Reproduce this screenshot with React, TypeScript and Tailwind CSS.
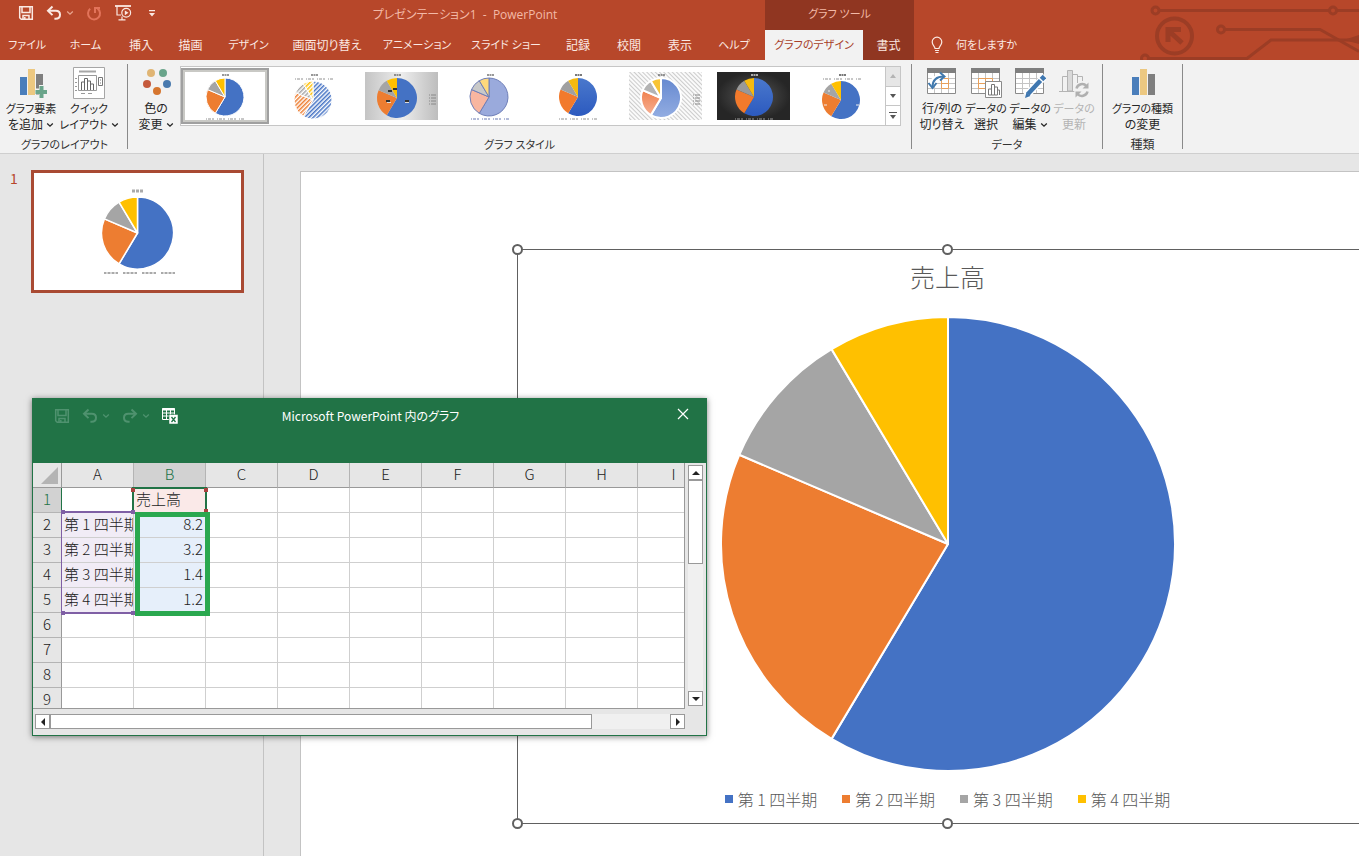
import type { ReactNode } from 'react'
import clsx from 'clsx'

const VALUES = [8.2, 3.2, 1.4, 1.2]
const COLORS = ['#4472c4', '#ed7d31', '#a5a5a5', '#ffc000']
const LABELS = ['第 1 四半期', '第 2 四半期', '第 3 四半期', '第 4 四半期']

const labelSize = (text: string) => (/[\u4e00-\u9fff]/.test(text) && !/[ァ-ー]{3}/.test(text) ? 'text-xs' : 'text-[11px]')

type PieProps = {
  cx: number
  cy: number
  r: number
  fills?: string[]
  stroke?: string
  strokeWidth?: number
}

const Pie = ({ cx, cy, r, fills = COLORS, stroke = '#fff', strokeWidth = 1 }: PieProps) => {
  const total = VALUES.reduce((a, b) => a + b, 0)
  let angle = 0
  return (
    <g stroke={stroke} strokeWidth={strokeWidth} strokeLinejoin="round">
      {VALUES.map((value, i) => {
        const start = angle
        angle += (value / total) * Math.PI * 2
        const large = angle - start > Math.PI ? 1 : 0
        const x1 = cx + r * Math.sin(start)
        const y1 = cy - r * Math.cos(start)
        const x2 = cx + r * Math.sin(angle)
        const y2 = cy - r * Math.cos(angle)
        return <path key={i} fill={fills[i]} d={`M${cx} ${cy}L${x1} ${y1}A${r} ${r} 0 ${large} 1 ${x2} ${y2}Z`} />
      })}
    </g>
  )
}

/* ---------- icons ---------- */

const Chevron = ({ className }: { className?: string }) => (
  <svg viewBox="0 0 8 8" className={clsx('h-2 w-2', className)} fill="none" stroke="currentColor" strokeWidth="1.3">
    <path d="M1.2 2.5 4 5.2 6.8 2.5" />
  </svg>
)

const SaveIcon = () => (
  <svg viewBox="0 0 16 16" className="h-4 w-4" fill="none" stroke="currentColor" strokeWidth="1.5">
    <path d="M1.7 1.7h12.6v12.6H3.2L1.7 12.8Z" />
    <path d="M4 2v5.500h8V2M5 14v-3.500h6v3.500M6.800 12v2" />
  </svg>
)

const UndoIcon = ({ className }: { className?: string }) => (
  <svg viewBox="0 0 16 16" className={clsx('h-4 w-4', className)} fill="none" stroke="currentColor" strokeWidth="2">
    <path d="M6.5 1.5 2 5.8l4.5 4.3" />
    <path d="M2.4 5.8h7.4c2.5 0 4.2 1.7 4.2 4s-1.7 4-4.4 4H8.4" />
  </svg>
)

const RepeatIcon = () => (
  <svg viewBox="0 0 16 16" className="h-4 w-4" fill="none" stroke="currentColor" strokeWidth="2">
    <path d="M4.2 3.8A6 6 0 1 0 11.6 3.6M9 8V3h5" />
  </svg>
)

const SlideshowIcon = () => (
  <svg viewBox="0 0 18 16" className="h-4 w-[18px]" fill="none" stroke="currentColor" strokeWidth="1.2">
    <path d="M1 1h16" strokeWidth="1.8" />
    <path d="M3 1v9h4M8 11.500v3M4.500 14.800h7" />
    <circle cx="12.2" cy="7.8" r="4.4" />
    <path d="m10.800 5.400 3.700 2.400-3.700 2.400Z" fill="currentColor" stroke="none" />
  </svg>
)

const Bars = () => (
  <>
    <rect x="5" y="10" width="7" height="18" fill="#4a7ebb" />
    <rect x="13" y="2" width="7" height="26" fill="#ecc881" />
    <rect x="21" y="7" width="7" height="21" fill="#7f7f7f" />
  </>
)

const Icon = ({ children }: { children: ReactNode }) => (
  <svg viewBox="0 0 32 32" className="h-8 w-8" fill="none">
    {children}
  </svg>
)

const AddElementIcon = () => (
  <Icon>
    <Bars />
    <path d="M27 18v13M20.5 24.5h13" stroke="#f2f2f2" strokeWidth="6" />
    <path d="M26.5 19v12M20.5 25h12" stroke="#6aa58b" strokeWidth="4" />
  </Icon>
)

const QuickLayoutIcon = () => (
  <Icon>
    <path d="M.5.5h31v31H.5Z" fill="#fff" stroke="#a6a6a6" />
    <path d="M6 4.5h17" stroke="#a6a6a6" strokeWidth="2" />
    <path d="M5.5 8.5h18v15h-18Z" stroke="#999" />
    <path d="M8.5 23v-8h3v8M11.5 23V11.500h3V23M14.500 23v-9h3v9M17.500 23v-6h3v6" stroke="#666" />
    <path d="M25.500 10.500h4v8h-4ZM27 13h1M27 16h1" stroke="#777" />
    <path d="M2 11.500h2M2 15.500h2M2 19.500h2M2 23.500h2M8 26.500h4M15 26.500h4" stroke="#999" />
  </Icon>
)

const ColorsIcon = () => (
  <Icon>
    <circle cx="11" cy="6" r="4" fill="#e0b574" />
    <circle cx="23" cy="6" r="4" fill="#6aa58b" />
    <circle cx="7" cy="17" r="4" fill="#c55a3c" />
    <circle cx="27" cy="17" r="4" fill="#4a7aae" />
    <circle cx="17" cy="24" r="4" fill="#d6762f" />
  </Icon>
)

const Grid = () => (
  <>
    <path d="M1.500 1.500h28v25h-28Z" fill="#fff" stroke="#8a8a8a" />
    <path d="M1 1h29v5H1Z" fill="#7f7f7f" />
    <path d="M2 11.500h27M2 16.500h27M2 21.500h27M8.500 6v20M15.500 6v20M22.500 6v20" stroke="#c4c4c4" />
  </>
)

const SwitchIcon = () => (
  <Icon>
    <Grid />
    <path d="M15.500 11.500h7v10h-7ZM15.500 16.500h7" stroke="#e8a05a" />
    <path d="M6 19C6 12 10 9.500 18 9.500" stroke="#fff" strokeWidth="5" />
    <path d="M6.500 20C6.500 13 10 9.500 18 9.500" stroke="#4179ad" strokeWidth="2" />
    <path d="m14 5.500 4.500 4-4.500 4M2.500 16l4 5 4-5" stroke="#4179ad" strokeWidth="2" />
  </Icon>
)

const SelectDataIcon = () => (
  <Icon>
    <Grid />
    <path d="M8.500 11.500h14M8.500 11.500v10M8.500 16.500h14M15.500 11.500v10M22.500 11.500v6M8.500 21.500h8" stroke="#e8a05a" />
    <path d="M15.500 14.500h16v16h-16Z" fill="#fff" stroke="#8a8a8a" />
    <path d="M18.500 28v-6h3v6ZM21.500 28V17.500h3V28ZM24.500 28v-8h3v8ZM27.500 28v-5h2v5" stroke="#777" />
  </Icon>
)

const EditDataIcon = () => (
  <Icon>
    <Grid />
    <path d="M31 9 12 29" stroke="#fff" strokeWidth="7" />
    <path d="m27.500 12.500 3-3" stroke="#3f77b0" strokeWidth="5" />
    <path d="M26.500 13.500 14 27" stroke="#3f77b0" strokeWidth="4.500" />
    <path d="m11 31 1.500-6 4 4Z" fill="#3f77b0" />
  </Icon>
)

const RefreshDataIcon = () => (
  <Icon>
    <path d="M1 24.500h17M4.500 24V9.500h5V24M14.500 24V7.500h5V16M19.500 9.500h5V14" stroke="#b4b4b4" />
    <path d="M9.500 3.500h5V24h-5Z" fill="#d9d9d9" stroke="#b4b4b4" />
    <circle cx="24" cy="23" r="8" fill="#f2f2f2" />
    <path d="M18.500 21.500a5.800 5.800 0 0 1 10-2.500M29.500 24.500a5.800 5.800 0 0 1-10 2.500" stroke="#b0b0b0" strokeWidth="2.500" />
    <path d="M30.500 15.500v6h-6ZM17.500 30.500v-6h6Z" fill="#b0b0b0" />
  </Icon>
)

/* ---------- header ---------- */

const TABS = [
  { label: 'ファイル', width: 'w-[54px]' },
  { label: 'ホーム', width: 'w-[63px]' },
  { label: '挿入', width: 'w-[48px]' },
  { label: '描画', width: 'w-[51px]' },
  { label: 'デザイン', width: 'w-[65px]' },
  { label: '画面切り替え', width: 'w-[92px]' },
  { label: 'アニメーション', width: 'w-[88px]' },
  { label: 'スライド ショー', width: 'w-[90px]' },
  { label: '記録', width: 'w-[54px]' },
  { label: '校閲', width: 'w-[48px]' },
  { label: '表示', width: 'w-[54px]' },
  { label: 'ヘルプ', width: 'w-[54px]' },
]

const Circuit = () => (
  <svg viewBox="0 0 219 60" className="absolute top-0 right-0 h-[60px] w-[219px]" fill="none" stroke="#9c3d25" strokeWidth="3">
    <circle cx="15.500" cy="10.500" r="3.500" />
    <path d="M19 10.500h170M197 10.500h22" />
    <circle cx="193" cy="10.500" r="3.500" />
    <circle cx="34.500" cy="36" r="17.500" strokeWidth="4" />
    <path d="M28 42V29.500h13M29 31l13 12" strokeWidth="5" />
    <circle cx="81" cy="29.500" r="3.500" />
    <path d="M85 29.500h95l39 22" />
    <circle cx="5" cy="58.500" r="3.500" />
    <path d="M9 58.500h98l24-18.500h88" />
    <path d="m204 40 15-5v9Z" fill="#9c3d25" stroke="none" />
  </svg>
)

const Header = () => (
  <header className="relative flex h-[60px] overflow-hidden bg-[#b7472a] text-[#fbe9e3]">
    <Circuit />
    <div className="flex w-[765px] shrink-0 flex-col">
      <div className="flex h-[30px] items-center">
        <div className="flex h-[30px] w-[165px] items-center pb-1 pl-[18px]">
          <button aria-label="上書き保存"><SaveIcon /></button>
          <button aria-label="元に戻す" className="ml-3"><UndoIcon /></button>
          <button aria-label="元に戻す一覧" className="ml-1 text-[#e8a58f]"><Chevron /></button>
          <button aria-label="繰り返し" className="ml-3 text-[#e2735a]"><RepeatIcon /></button>
          <button aria-label="最初から開始" className="ml-3"><SlideshowIcon /></button>
          <button aria-label="クイック アクセス ツール バーのカスタマイズ" className="ml-4">
            <svg viewBox="0 0 8 8" className="h-2 w-2" fill="currentColor">
              <path d="M1 1h6v1.200H1ZM1 4h6L4 7.500Z" />
            </svg>
          </button>
        </div>
        <h1 className="flex-1 text-center text-xs whitespace-pre text-[#f3b9a7]">プレゼンテーション1  -  PowerPoint</h1>
      </div>
      <nav className="flex h-[30px] pt-px">
        {TABS.map((tab) => (
          <button
            key={tab.label}
            className={clsx('flex shrink-0 items-center justify-center whitespace-nowrap', labelSize(tab.label), tab.width)}
          >
            {tab.label}
          </button>
        ))}
      </nav>
    </div>
    <div className="relative w-[149px] shrink-0 bg-[#903621]">
      <p className="h-[30px] text-center text-[11px] leading-7 text-[#f3b9a7]">グラフ ツール</p>
      <div className="flex h-[30px]">
        <button className="w-[98px] bg-[#f2f2f2] pt-px text-[11px] whitespace-nowrap text-[#a8402a]">グラフのデザイン</button>
        <button className="flex-1 pt-px text-xs">書式</button>
      </div>
    </div>
    <div className="flex items-end pl-4">
      <button className="flex h-[30px] items-center gap-3 text-[11px]">
        <svg viewBox="0 0 14 18" className="h-[18px] w-[14px]" fill="none" stroke="currentColor" strokeWidth="1.200">
          <path d="M5 12.500c0-2-2.800-3-2.800-6.500a4.800 4.800 0 0 1 9.600 0c0 3.500-2.800 4.500-2.800 6.500ZM5 14.500h4M5.500 16.500h3" />
        </svg>
        何をしますか
      </button>
    </div>
  </header>
)

/* ---------- ribbon ---------- */

type RibbonButtonProps = {
  icon: ReactNode
  lines: [string, string]
  menu?: boolean
  disabled?: boolean
  className?: string
}

const RibbonButton = ({ icon, lines, menu, disabled, className }: RibbonButtonProps) => (
  <button
    disabled={disabled}
    className={clsx(
      'flex shrink-0 flex-col items-center text-[11px] leading-4 whitespace-nowrap',
      disabled ? 'text-[#b4b4b4]' : 'text-[#262626]',
      className,
    )}
  >
    <span className="flex h-[35px] items-start pt-px">{icon}</span>
    <span className={clsx('leading-4', labelSize(lines[0]))}>{lines[0]}</span>
    <span className={clsx('flex items-center gap-[3px] leading-4', labelSize(lines[1]))}>
      {lines[1]}
      {menu && <Chevron />}
    </span>
  </button>
)

const RibbonGroup = ({ label, className, children }: { label: string; className?: string; children: ReactNode }) => (
  <section aria-label={label} className="flex shrink-0">
    <div className={clsx('flex flex-col pt-[6px]', className)}>
      <div className="flex h-[67px]">{children}</div>
      <p className={clsx('mt-1 text-center leading-4 text-[#333]', labelSize(label))}>{label}</p>
    </div>
    <div className="mt-1 h-[85px] w-px bg-[#8a8a8a]" />
  </section>
)

const Dashes = ({ y, color = '#777', x = 18 }: { y: number; color?: string; x?: number }) => (
  <path d={`M${x} ${y}h38`} stroke={color} strokeWidth="1" strokeDasharray="1 1 3 1 2 3" opacity="0.8" />
)

const TitleMark = ({ color = '#555', x = 37 }: { color?: string; x?: number }) => (
  <path d={`M${x - 3} 3h7`} stroke={color} strokeWidth="1.500" strokeDasharray="2 .5" opacity="0.8" />
)

const SideLegend = ({ color = '#888' }: { color?: string }) => (
  <path d="M64 23h8M64 26h8M64 29h8M64 32h8" stroke={color} strokeDasharray="1 1 5 1" />
)

const STYLES: { name: string; art: ReactNode }[] = [
  {
    name: 'スタイル 1',
    art: (
      <>
        <TitleMark x={36} />
        <Pie cx={36} cy={25} r={19} />
        <Dashes y={47} x={17} />
      </>
    ),
  },
  {
    name: 'スタイル 2',
    art: (
      <>
        <TitleMark />
        <Dashes y={7} />
        <Pie cx={36} cy={28} r={19} fills={['url(#hatch0)', 'url(#hatch1)', 'url(#hatch2)', 'url(#hatch3)']} />
      </>
    ),
  },
  {
    name: 'スタイル 3',
    art: (
      <>
        <rect width="73" height="48" fill="url(#silver)" />
        <TitleMark x={32} />
        <Pie cx={32} cy={26} r={20} stroke="none" />
        <path d="M21 29h4M40 29h4M23 19h4M28 17h4" stroke="#333" strokeWidth="2" />
        <path d="M22 30.500h4M40 30.500h4" stroke="#ddd" />
        <SideLegend />
      </>
    ),
  },
  {
    name: 'スタイル 4',
    art: (
      <>
        <TitleMark />
        <Pie cx={36} cy={25} r={19} fills={['#9aaadc', '#f8b6a0', '#c9c9c9', '#ffd97c']} stroke="#6f7fb8" />
        <Dashes y={47} color="#4458a0" />
      </>
    ),
  },
  {
    name: 'スタイル 5',
    art: (
      <>
        <TitleMark color="#222" />
        <Pie cx={37} cy={25} r={19} fills={['url(#blue)', '#f27a2c', '#a0a0a0', '#f5ba10']} stroke="none" />
        <Dashes y={47} />
      </>
    ),
  },
  {
    name: 'スタイル 6',
    art: (
      <>
        <rect width="73" height="48" fill="url(#stripes)" />
        <TitleMark x={32} />
        <Pie cx={32} cy={26} r={20} fills={['url(#soft)', 'url(#peach)', '#b4b4b4', '#f8c435']} strokeWidth={2} />
        <SideLegend />
      </>
    ),
  },
  {
    name: 'スタイル 7',
    art: (
      <>
        <rect width="73" height="48" fill="url(#dark)" />
        <TitleMark color="#fff" />
        <Pie cx={37} cy={25} r={19} fills={['url(#blue)', '#f27a2c', '#999', '#f5ba10']} stroke="none" />
        <Dashes y={47} color="#bbb" />
      </>
    ),
  },
  {
    name: 'スタイル 8',
    art: (
      <>
        <TitleMark color="#222" />
        <Dashes y={7} />
        <Pie cx={36} cy={28} r={19} stroke="none" />
        <path d="M19 33h3M51 33h3M23 19h2" stroke="#eee" />
      </>
    ),
  },
]

const GalleryDefs = () => (
  <svg className="absolute h-0 w-0" aria-hidden="true">
    <defs>
      {COLORS.map((color, i) => (
        <pattern key={color} id={`hatch${i}`} width="3" height="3" patternUnits="userSpaceOnUse" patternTransform="rotate(45)">
          <rect width="3" height="3" fill="#fff" />
          <rect width="1.500" height="3" fill={color} />
        </pattern>
      ))}
      <pattern id="stripes" width="3" height="3" patternUnits="userSpaceOnUse" patternTransform="rotate(-45)">
        <rect width="3" height="3" fill="#fafafa" />
        <rect width="1" height="3" fill="#ccc" />
      </pattern>
      <linearGradient id="silver">
        <stop offset="0" stopColor="#c4c4c4" />
        <stop offset=".5" stopColor="#ededed" />
        <stop offset="1" stopColor="#bdbdbd" />
      </linearGradient>
      <linearGradient id="blue" x2="0" y2="1">
        <stop offset="0" stopColor="#4a78cc" />
        <stop offset="1" stopColor="#2c5abf" />
      </linearGradient>
      <linearGradient id="soft" x2="0" y2="1">
        <stop offset="0" stopColor="#6689d0" />
        <stop offset="1" stopColor="#93ade2" />
      </linearGradient>
      <linearGradient id="peach" x2="0" y2="1">
        <stop offset="0" stopColor="#f0804c" />
        <stop offset="1" stopColor="#f6b095" />
      </linearGradient>
      <radialGradient id="dark">
        <stop offset="0" stopColor="#585858" />
        <stop offset="1" stopColor="#262626" />
      </radialGradient>
    </defs>
  </svg>
)

const Gallery = () => (
  <div className="flex h-[60px] flex-1 border border-[#c6c6c6] bg-white">
    <GalleryDefs />
    {STYLES.map((style, i) => (
      <button
        key={style.name}
        aria-label={style.name}
        className={clsx('flex w-[88px] items-center justify-center', i === 0 && 'my-px border-2 border-[#a0a0a0] bg-[#c9c9c5]')}
      >
        <span className={clsx('flex justify-center', i === 0 && 'w-20 bg-white')}>
          <svg viewBox="0 0 73 48" className="h-12 w-[73px]">
            {style.art}
          </svg>
        </span>
      </button>
    ))}
    <div className="flex flex-1 flex-col divide-y divide-[#c6c6c6] border-l border-[#c6c6c6] text-[#555]">
      <button aria-label="上へ" className="flex flex-1 items-center justify-center bg-[#e6e6e6] text-[#b4b4b4]">
        <svg viewBox="0 0 6 4" className="h-1 w-[6px]" fill="currentColor"><path d="M3 0 6 4H0Z" /></svg>
      </button>
      <button aria-label="下へ" className="flex flex-1 items-center justify-center">
        <svg viewBox="0 0 6 4" className="h-1 w-[6px]" fill="currentColor"><path d="M0 0h6L3 4Z" /></svg>
      </button>
      <button aria-label="その他" className="flex flex-1 items-center justify-center">
        <svg viewBox="0 0 8 7" className="h-[7px] w-2" fill="currentColor"><path d="M0 0h8v1H0ZM1 3h6L4 7Z" /></svg>
      </button>
    </div>
  </div>
)

const Ribbon = () => (
  <div className="flex h-[94px] overflow-hidden border-b border-[#cfcfcf] bg-[#f2f2f2]">
    <RibbonGroup label="グラフのレイアウト" className="w-[127px] pl-[2px]">
      <RibbonButton icon={<AddElementIcon />} lines={['グラフ要素', 'を追加']} menu className="w-[58px]" />
      <RibbonButton icon={<QuickLayoutIcon />} lines={['クイック', 'レイアウト']} menu className="w-[58px]" />
    </RibbonGroup>
    <RibbonGroup label="グラフ スタイル" className="w-[783px]">
      <RibbonButton icon={<ColorsIcon />} lines={['色の', '変更']} menu className="w-[52px] pl-1" />
      <Gallery />
      <div className="w-[10px]" />
    </RibbonGroup>
    <RibbonGroup label="データ" className="w-[190px]">
      <div className="flex pl-2">
        <RibbonButton icon={<SwitchIcon />} lines={['行/列の', '切り替え']} className="w-11" />
        <RibbonButton icon={<SelectDataIcon />} lines={['データの', '選択']} className="w-11" />
        <RibbonButton icon={<EditDataIcon />} lines={['データの', '編集']} menu className="w-11" />
        <RibbonButton icon={<RefreshDataIcon />} lines={['データの', '更新']} disabled className="w-11" />
      </div>
    </RibbonGroup>
    <RibbonGroup label="種類" className="w-[79px]">
      <RibbonButton icon={<Icon><Bars /></Icon>} lines={['グラフの種類', 'の変更']} className="w-full" />
    </RibbonGroup>
  </div>
)

/* ---------- slide ---------- */

const SlideList = () => (
  <aside className="flex w-[264px] shrink-0 items-start border-r border-[#c3c3c3] pt-4 text-[#b7472a]">
    <span className="w-[31px] pl-[10px] text-sm leading-4">1</span>
    <button aria-label="スライド 1" className="h-[123px] w-[213px] border-3 border-[#a94a33] bg-white">
      <svg viewBox="0 0 207 117" className="h-full w-full">
        <Pie cx={103.5} cy={60} r={36} strokeWidth={1.5} />
        <path d="M98 18h11" stroke="#aaa" strokeWidth="3" strokeDasharray="3 1" />
        {[70, 89, 108, 127].map((x) => (
          <path key={x} d={`M${x} 100h14`} stroke="#aaa" strokeWidth="2" strokeDasharray="2 .5 1 .5" />
        ))}
      </svg>
    </button>
  </aside>
)

const Handle = ({ className }: { className: string }) => (
  <span className={clsx('absolute h-[11px] w-[11px] rounded-full border-2 border-[#606060] bg-white', className)} />
)

const Slide = () => (
  <section className="mt-[17px] ml-9 flex-1 overflow-hidden border-t border-l border-[#c3c3c3] bg-white pt-[77px] pl-[216px]">
    <div className="relative flex h-[575px] w-[861px] flex-col items-center border border-[#606060]">
      <Handle className="-top-[6px] -left-[6px]" />
      <Handle className="-top-[6px] left-[424px]" />
      <Handle className="-bottom-[6px] -left-[6px]" />
      <Handle className="-bottom-[6px] left-[424px]" />
      <h2 className="mt-2 text-[25px] leading-9 font-light text-[#595959]">売上高</h2>
      <svg viewBox="0 0 456 456" className="mt-[22px] h-[456px] w-[456px]" role="img" aria-label="売上高">
        <Pie cx={228} cy={228} r={227} strokeWidth={2} />
      </svg>
      <ul className="mt-[15px] flex gap-[25px] text-base leading-6 font-light text-[#595959] [font-feature-settings:normal]">
        {LABELS.map((label, i) => (
          <li key={label} className="flex items-center gap-[5px] whitespace-nowrap">
            <svg viewBox="0 0 8 8" className="h-2 w-2"><rect width="8" height="8" fill={COLORS[i]} /></svg>
            {label}
          </li>
        ))}
      </ul>
    </div>
  </section>
)

/* ---------- embedded sheet ---------- */

const COLUMNS = ['A', 'B', 'C', 'D', 'E', 'F', 'G', 'H', 'I']
const ROWS = [1, 2, 3, 4, 5, 6, 7, 8, 9]

const cellText = (row: number, col: string) => {
  if (row === 1) return col === 'B' ? '売上高' : ''
  if (row > 5) return ''
  if (col === 'A') return LABELS[row - 2]
  if (col === 'B') return VALUES[row - 2].toFixed(1)
  return ''
}

const cellFill = (row: number, col: string) => {
  if (col === 'B' && row === 1) return 'bg-[#fae9e8]'
  if (col === 'A' && row > 1 && row < 6) return 'bg-[#f1ecf6]'
  if (col === 'B' && row > 1 && row < 6) return 'bg-[#e6effa] text-right'
  return 'bg-white'
}

const Sheet = () => (
  <div className="relative h-[246px] w-[652px] overflow-hidden border-r border-b border-[#999]">
    <table className="w-[677px] table-fixed border-separate border-spacing-0 text-[15px] font-light text-[#222] [font-feature-settings:normal]">
      <thead>
        <tr className="h-[25px]">
          <th className="w-[29px] border-r border-b border-[#999] bg-[#e6e6e6] p-0">
            <svg viewBox="0 0 28 24" className="h-6 w-7"><path d="M25 4v17H8Z" fill="#b4b4b4" /></svg>
          </th>
          {COLUMNS.map((col) => (
            <th
              key={col}
              scope="col"
              className={clsx(
                'w-[72px] border-r border-b p-0 align-top leading-[22px] font-light',
                col === 'B' ? 'border-r-[#b4b4b4] border-b-[#217346] bg-[#d2d2d2] text-[#217346]' : 'border-r-[#b4b4b4] border-b-[#999] bg-[#e6e6e6]',
              )}
            >
              {col}
            </th>
          ))}
        </tr>
      </thead>
      <tbody>
        {ROWS.map((row) => (
          <tr key={row} className="h-[25px]">
            <th
              scope="row"
              className={clsx(
                'border-r border-b border-b-[#b4b4b4] p-0 align-top leading-[22px] font-light',
                row === 1 ? 'border-r-[#217346] bg-[#d2d2d2] text-[#217346]' : 'border-r-[#999] bg-[#e6e6e6]',
              )}
            >
              {row}
            </th>
            {COLUMNS.map((col) => (
              <td
                key={col}
                className={clsx(
                  'overflow-hidden border-r border-b border-[#cfcfcf] px-[2px] py-0 align-top leading-[22px] whitespace-nowrap',
                  cellFill(row, col),
                )}
              >
                {cellText(row, col)}
              </td>
            ))}
          </tr>
        ))}
      </tbody>
    </table>
    {/* range outlines */}
    <div className="absolute top-6 left-[99px] h-[26px] w-[75px] border-x-2 border-t-2 border-[#217346]" />
    <div className="absolute top-12 left-7 h-[103px] w-[73px] border-y-2 border-l border-[#7f5fa5]" />
    {['top-[25px] left-[98px]', 'top-[25px] left-[171px]', 'top-[46px] left-[171px]'].map((place) => (
      <span key={place} className={clsx('absolute h-1 w-1 bg-[#a9433f]', place)} />
    ))}
    {['top-[47px] left-7', 'top-[47px] left-[98px]', 'top-[148px] left-7', 'top-[148px] left-[98px]'].map((place) => (
      <span key={place} className={clsx('absolute h-1 w-1 bg-[#7f5fa5]', place)} />
    ))}
    <div className="absolute top-[49px] left-[102px] h-[104px] w-[75px] border-5 border-[#2aa84f]" />
  </div>
)

const ScrollButton = ({ label, path }: { label: string; path: string }) => (
  <button aria-label={label} className="flex h-[15px] w-[15px] shrink-0 items-center justify-center border border-[#999] bg-white">
    <svg viewBox="0 0 8 8" className="h-2 w-2" fill="#222"><path d={path} /></svg>
  </button>
)

const ChartDataWindow = () => (
  <section
    aria-label="Microsoft PowerPoint 内のグラフ"
    className="absolute top-[244px] left-8 w-[675px] border border-[#217346] bg-[#e6e6e6] shadow-[0_1px_6px_rgba(0,0,0,0.5)]"
  >
    <div className="flex h-16 items-start bg-[#217346] text-white">
      <div className="flex h-[34px] w-[174px] items-center pl-[21px] text-[#4f926f]">
        <button aria-label="保存"><SaveIcon /></button>
        <button aria-label="元に戻す" className="ml-3"><UndoIcon /></button>
        <button aria-label="元に戻す一覧" className="ml-1"><Chevron /></button>
        <button aria-label="やり直し" className="ml-3"><UndoIcon className="-scale-x-100" /></button>
        <button aria-label="やり直し一覧" className="ml-1"><Chevron /></button>
        <button aria-label="Microsoft Excel でデータを編集" className="ml-3 text-white">
          <svg viewBox="0 0 16 16" className="h-4 w-4" fill="none" stroke="currentColor">
            <path d="M.5.5h12v11H.5Z" />
            <path d="M0 1.500h13" strokeWidth="2" />
            <path d="M.5 5h12M.5 8h12M4.500 1v10M8.500 1v10" />
            <path d="M7 6.500h9V16H7Z" fill="#fff" stroke="#217346" strokeWidth=".5" />
            <path d="m9.500 9 4 5M13.500 9l-4 5" stroke="#217346" strokeWidth="1.300" />
          </svg>
        </button>
      </div>
      <h2 className="flex-1 pr-[14px] text-center text-xs leading-[34px]">Microsoft PowerPoint 内のグラフ</h2>
      <button aria-label="閉じる" className="mt-[9px] mr-[17px] ml-[129px]">
        <svg viewBox="0 0 12 12" className="h-3 w-3" stroke="currentColor" strokeWidth="1.200"><path d="m1 1 10 10M11 1 1 11" /></svg>
      </button>
    </div>
    <div className="flex">
      <Sheet />
      <div className="mt-[2px] ml-[3px] flex h-[241px] w-[15px] flex-col bg-[#f0f0f0]">
        <ScrollButton label="上へスクロール" path="M4 2 8 6H0Z" />
        <div className="h-[84px] border border-[#999] bg-white" />
        <div className="flex-1" />
        <ScrollButton label="下へスクロール" path="M0 2h8L4 6Z" />
      </div>
    </div>
    <div className="mt-[5px] mb-[6px] ml-[2px] flex h-[15px] w-[650px] bg-[#f0f0f0]">
      <ScrollButton label="左へスクロール" path="M2 4 6 0v8Z" />
      <div className="w-[542px] border border-[#999] bg-white" />
      <div className="flex-1" />
      <ScrollButton label="右へスクロール" path="M6 4 2 0v8Z" />
    </div>
  </section>
)

export default function App() {
  return (
    <div className="flex min-h-screen flex-col overflow-hidden bg-[#e6e6e6] font-['Open_Sans','Noto_Sans_CJK_JP',sans-serif] [font-feature-settings:'palt']">
      <Header />
      <Ribbon />
      <main className="relative flex flex-1 font-['Noto_Sans_CJK_JP',sans-serif]">
        <SlideList />
        <Slide />
        <ChartDataWindow />
      </main>
    </div>
  )
}
